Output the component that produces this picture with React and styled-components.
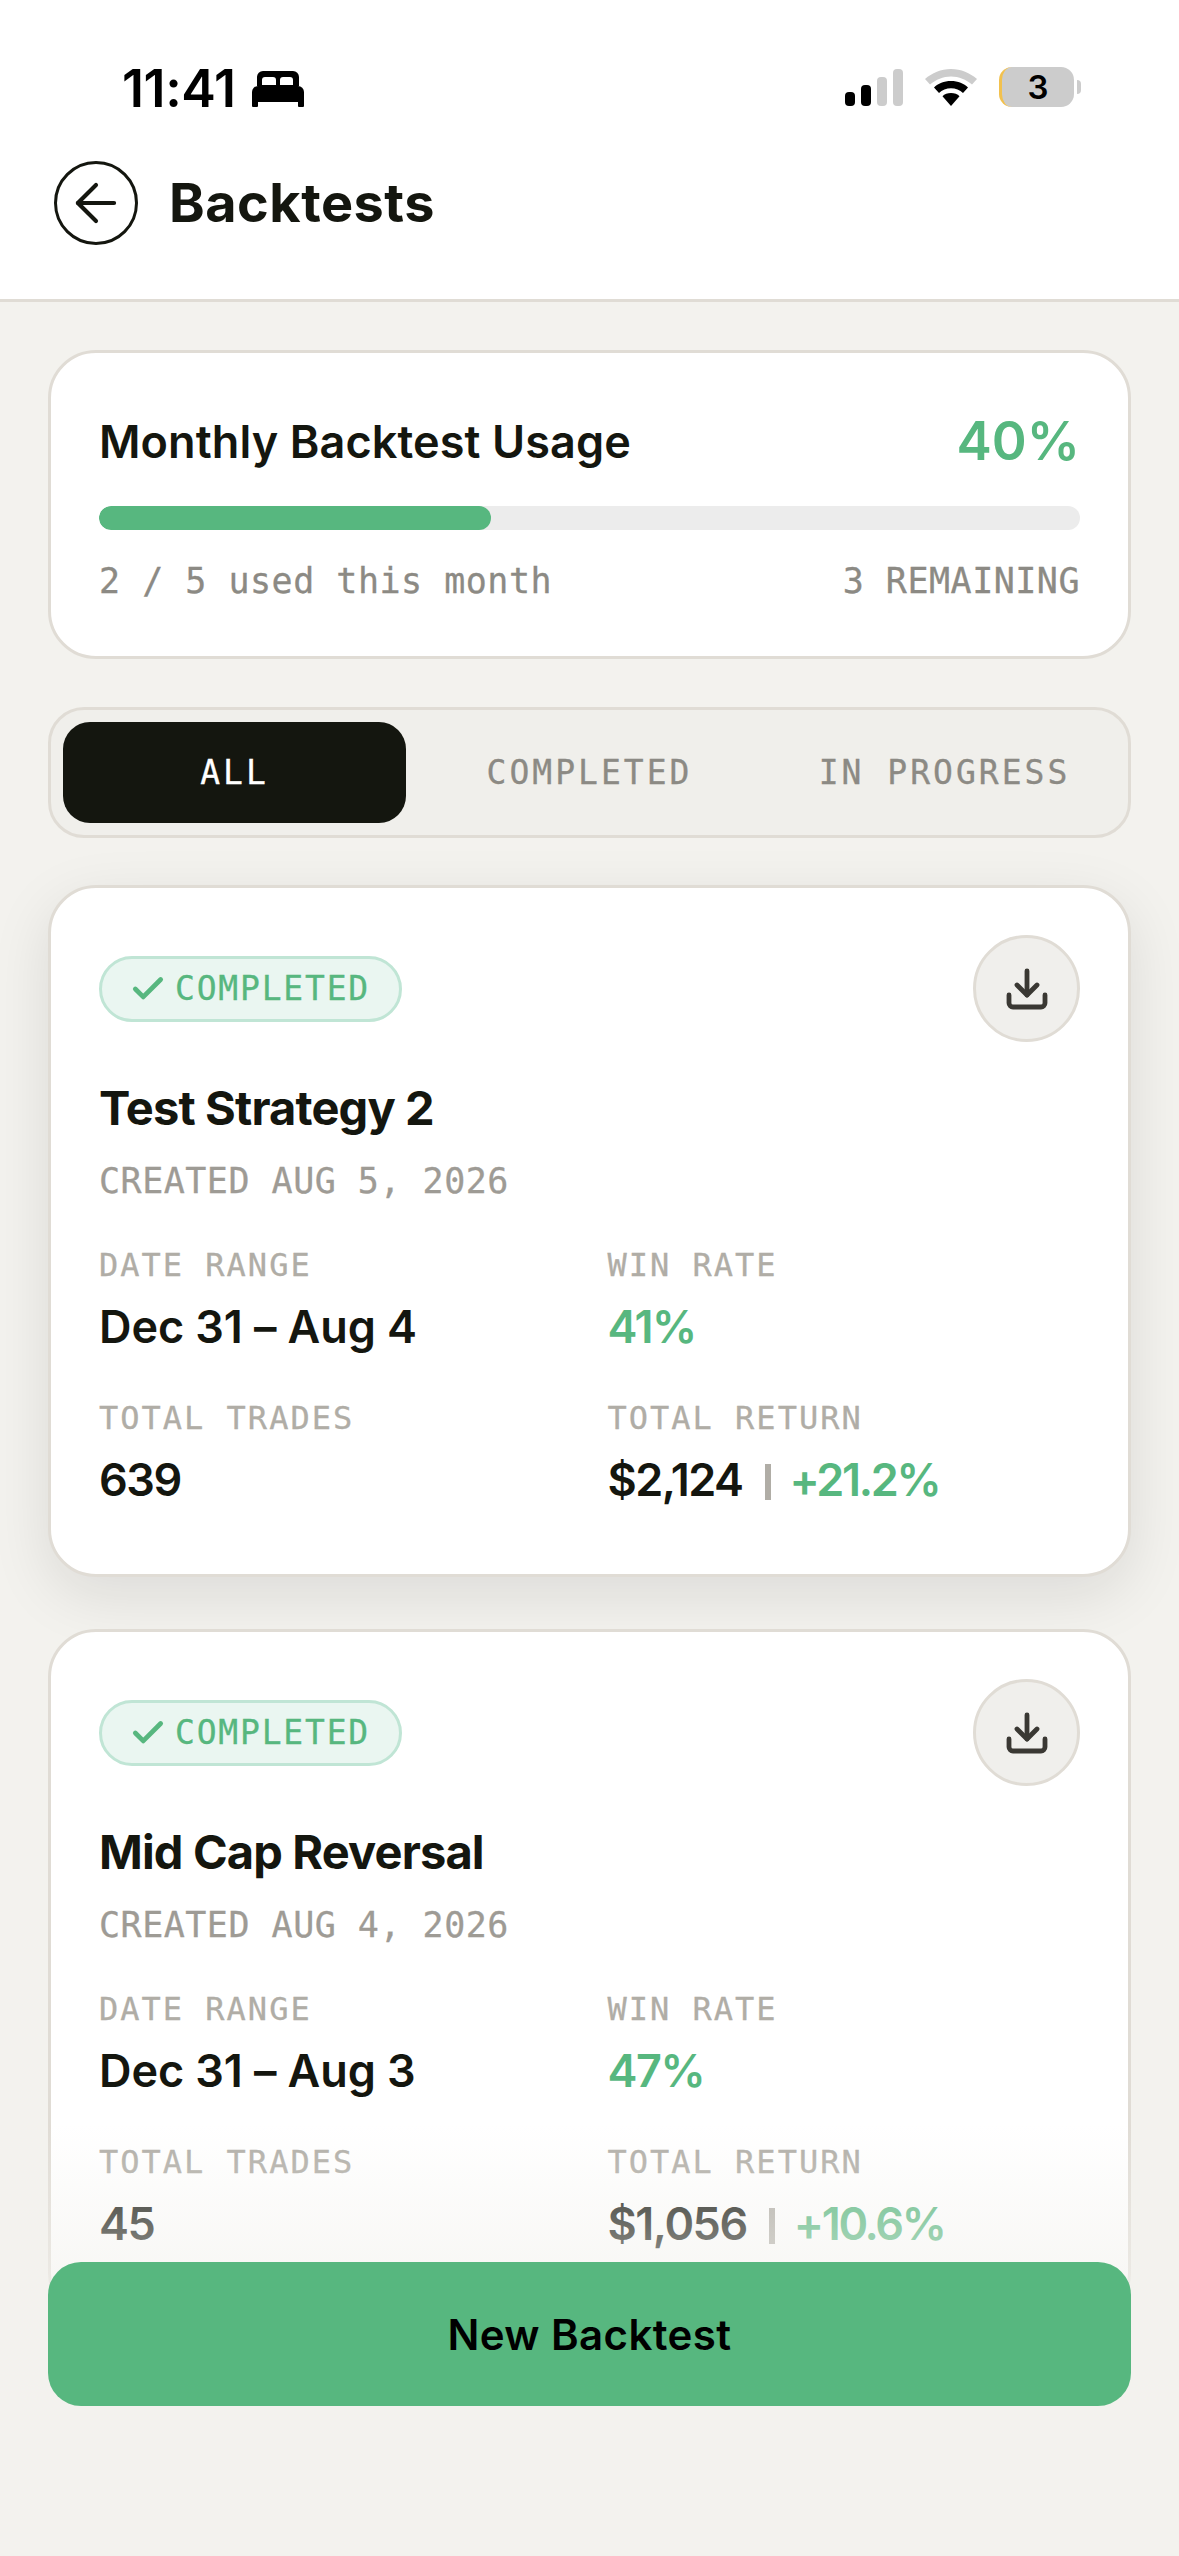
import React from "react";
import styled, { createGlobalStyle } from "styled-components";
import { ArrowLeft, Check, Download } from "lucide-react";

const GlobalStyle = createGlobalStyle`
  html, body {
    margin: 0;
    padding: 0;
    background: #f3f2ee;
  }
  * {
    box-sizing: border-box;
  }
`;

const sans = `Inter, "Liberation Sans", sans-serif`;
const mono = `"DejaVu Sans Mono", "Liberation Mono", monospace`;
const green = "#57b77f";
const ink = "#14160f";
const line = "#e0dcd5";

const Page = styled.div`
  position: relative;
  width: 1179px;
  height: 2556px;
  overflow: hidden;
  background: #f3f2ee;
  font-family: ${sans};
  color: ${ink};
`;

const Header = styled.header`
  height: 302px;
  background: #fff;
  border-bottom: 3px solid ${line};
`;

const StatusBar = styled.div`
  display: flex;
  justify-content: space-between;
  align-items: flex-start;
  height: 161px;
  padding: 65px 98px 0 122px;
`;

const TimeGroup = styled.div`
  display: flex;
  align-items: center;
  gap: 16px;
  height: 48px;
`;

const Time = styled.span`
  font-size: 52px;
  line-height: 48px;
  font-weight: 600;
  color: #000;
  letter-spacing: -0.4px;
`;

const StatusIcons = styled.div`
  display: flex;
  align-items: center;
  height: 44px;
  gap: 22px;
`;

const Battery = styled.div`
  display: flex;
  align-items: center;
  gap: 3px;
`;

const BatteryBody = styled.div`
  width: 75px;
  height: 40px;
  border-radius: 13px;
  background: #ccc;
  border-left: 3px solid #f2c14e;
  display: flex;
  align-items: center;
  justify-content: center;
  font-size: 33px;
  font-weight: 600;
  color: #000;
`;

const BatteryNub = styled.div`
  width: 4px;
  height: 14px;
  border-radius: 0 7px 7px 0;
  background: #ccc;
`;

const TitleRow = styled.div`
  display: flex;
  align-items: center;
  gap: 31px;
  padding-left: 54px;
`;

const BackButton = styled.div`
  width: 84px;
  height: 84px;
  border-radius: 50%;
  border: 3px solid ${ink};
  display: flex;
  align-items: center;
  justify-content: center;
  background: #fff;
`;

const PageTitle = styled.h1`
  margin: 0;
  font-size: 54px;
  line-height: 84px;
  font-weight: 700;
  letter-spacing: 0.5px;
`;

const Content = styled.main`
  padding: 48px 48px 0;
  display: flex;
  flex-direction: column;
`;

const UsageCard = styled.section`
  height: 309px;
  background: #fff;
  border: 3px solid ${line};
  border-radius: 48px;
  padding: 47px 48px 0;
`;

const UsageHead = styled.div`
  display: flex;
  justify-content: space-between;
  align-items: center;
  height: 82px;
`;

const UsageTitle = styled.h2`
  margin: 0;
  font-size: 45px;
  font-weight: 600;
  letter-spacing: 0.1px;
`;

const UsagePercent = styled.span`
  font-size: 53px;
  font-weight: 600;
  color: ${green};
`;

const Track = styled.div`
  height: 24px;
  margin-top: 24px;
  border-radius: 12px;
  background: #ececec;
  overflow: hidden;
`;

const Fill = styled.div`
  height: 100%;
  border-radius: 12px;
  background: ${green};
`;

const UsageFoot = styled.div`
  display: flex;
  justify-content: space-between;
  margin-top: 29px;
  font-family: ${mono};
  font-size: 35px;
  line-height: 44px;
  letter-spacing: 0.5px;
  -webkit-text-stroke: 0.3px #8c8a84;
  color: #8c8a84;
`;

const Tabs = styled.nav`
  display: flex;
  gap: 12px;
  height: 131px;
  margin-top: 48px;
  padding: 12px;
  background: #f0efeb;
  border: 3px solid ${line};
  border-radius: 36px;
`;

const Tab = styled.div`
  flex: 1;
  display: flex;
  align-items: center;
  justify-content: center;
  border-radius: 27px;
  font-family: ${mono};
  font-size: 33px;
  letter-spacing: 3px;
  -webkit-text-stroke: 0.3px currentColor;
  background: ${(p) => (p.$active ? ink : "transparent")};
  color: ${(p) => (p.$active ? "#fff" : "#8c8a84")};
`;

const Card = styled.article`
  margin-top: ${(p) => (p.$first ? "47px" : "52px")};
  background: #fff;
  border: 3px solid ${line};
  border-radius: 48px;
  padding: 47px 48px 64px;
  box-shadow: ${(p) => (p.$first ? "0 18px 60px rgba(20, 22, 15, 0.1)" : "none")};
`;

const CardTop = styled.div`
  display: flex;
  justify-content: space-between;
  align-items: center;
`;

const Badge = styled.div`
  display: flex;
  align-items: center;
  gap: 8px;
  height: 66px;
  padding: 0 29px 0 27px;
  border: 3px solid #c0e5d5;
  border-radius: 33px;
  background: #eaf6f1;
  font-family: ${mono};
  font-size: 33px;
  letter-spacing: 1.8px;
  -webkit-text-stroke: 0.3px ${green};
  color: ${green};
`;

const IconButton = styled.div`
  width: 107px;
  height: 107px;
  border-radius: 50%;
  border: 3px solid ${line};
  background: #f0efec;
  display: flex;
  align-items: center;
  justify-content: center;
  color: #3a3833;
`;

const CardTitle = styled.h3`
  margin: 36px 0 0;
  font-size: 47px;
  line-height: 60px;
  font-weight: 700;
  letter-spacing: -0.85px;
`;

const Created = styled.div`
  margin-top: 21px;
  font-family: ${mono};
  font-size: 35px;
  line-height: 44px;
  letter-spacing: 0.5px;
  -webkit-text-stroke: 0.3px #9e9b95;
  color: #9e9b95;
`;

const Stats = styled.div`
  display: grid;
  grid-template-columns: 1fr 1fr;
  column-gap: 36px;
  row-gap: 41px;
  margin-top: 42px;
`;

const Label = styled.div`
  font-family: ${mono};
  font-size: 32px;
  line-height: 40px;
  letter-spacing: 2px;
  -webkit-text-stroke: 0.3px #b0ada6;
  color: #b0ada6;
`;

const Value = styled.div`
  margin-top: 12px;
  font-size: 45px;
  line-height: 60px;
  font-weight: 600;
  letter-spacing: ${(p) => (p.$wide ? "-0.1px" : "-1.5px")};
  color: ${(p) => (p.$good ? green : ink)};
`;

const Good = styled.span`
  color: ${green};
  letter-spacing: -2.3px;
`;

const Divider = styled.span`
  display: inline-block;
  width: 6px;
  height: 36px;
  margin: 0 19px 0 22px;
  background: #b0ada6;
  vertical-align: -4px;
`;

const Footer = styled.div`
  position: absolute;
  left: 0;
  right: 0;
  bottom: 0;
  height: 432px;
  padding: 138px 48px 0;
  background: linear-gradient(to bottom, rgba(243, 242, 238, 0), #f3f2ee 256px);
`;

const PrimaryButton = styled.button`
  display: block;
  width: 100%;
  height: 144px;
  border: 0;
  border-radius: 33px;
  background: ${green};
  font-family: ${sans};
  font-size: 42px;
  font-weight: 600;
  letter-spacing: 0.4px;
  color: #000;
`;

const tabs = ["ALL", "COMPLETED", "IN PROGRESS"];

const backtests = [
  {
    name: "Test Strategy 2",
    created: "AUG 5, 2026",
    range: "Dec 31 – Aug 4",
    winRate: "41%",
    trades: "639",
    amount: "$2,124",
    gain: "+21.2%",
  },
  {
    name: "Mid Cap Reversal",
    created: "AUG 4, 2026",
    range: "Dec 31 – Aug 3",
    winRate: "47%",
    trades: "45",
    amount: "$1,056",
    gain: "+10.6%",
  },
];

function BedIcon() {
  return (
    <svg width="52" height="36" viewBox="0 0 52 36">
      <path
        fillRule="evenodd"
        d="M11 0h30a6 6 0 0 1 6 6v9H5V6a6 6 0 0 1 6-6zM10 14V9a3 3 0 0 1 3-3h8a3 3 0 0 1 3 3v5zM28 14V9a3 3 0 0 1 3-3h7a3 3 0 0 1 3 3v5z"
      />
      <path d="M6 15h40a6 6 0 0 1 6 6v14a1 1 0 0 1-1 1h-4a1 1 0 0 1-1-1v-4H6v4a1 1 0 0 1-1 1H1a1 1 0 0 1-1-1V21a6 6 0 0 1 6-6z" />
    </svg>
  );
}

function SignalIcon() {
  return (
    <svg width="58" height="37" viewBox="0 0 58 37">
      <rect x="0" y="23" width="10" height="14" rx="4" />
      <rect x="16" y="16" width="10" height="21" rx="4" />
      <rect x="32" y="8" width="10" height="29" rx="4" fill="#ccc" />
      <rect x="48" y="0" width="10" height="37" rx="4" fill="#ccc" />
    </svg>
  );
}

function WifiIcon() {
  return (
    <svg width="52" height="37" viewBox="0 0 52 37">
      <path d="M26 0c10 0 19 4 26 10l-5 5.500C41 10.500 34 7.500 26 7.500S11 10.500 5 15.500L0 10C7 4 16 0 26 0z" fill="#ccc" />
      <path d="M26 12c7 0 13 2.500 17 6.500l-5 5.500c-3-3-7.500-4.800-12-4.800S17 21 14 24l-5-5.500C13 14.500 19 12 26 12z" />
      <path d="M26 24c3.500 0 6.500 1.200 8.500 3.200L26 37l-8.500-9.800C19.500 25.200 22.500 24 26 24z" />
    </svg>
  );
}

function BacktestCard({ item, first }) {
  return (
    <Card $first={first}>
      <CardTop>
        <Badge>
          <Check size={38} strokeWidth={3} />
          COMPLETED
        </Badge>
        <IconButton>
          <Download size={48} strokeWidth={2.4} />
        </IconButton>
      </CardTop>
      <CardTitle>{item.name}</CardTitle>
      <Created>CREATED {item.created}</Created>
      <Stats>
        <div>
          <Label>DATE RANGE</Label>
          <Value $wide>{item.range}</Value>
        </div>
        <div>
          <Label>WIN RATE</Label>
          <Value $good>{item.winRate}</Value>
        </div>
        <div>
          <Label>TOTAL TRADES</Label>
          <Value>{item.trades}</Value>
        </div>
        <div>
          <Label>TOTAL RETURN</Label>
          <Value>
            {item.amount}
            <Divider />
            <Good>{item.gain}</Good>
          </Value>
        </div>
      </Stats>
    </Card>
  );
}

export default function App() {
  const used = 2;
  const limit = 5;

  return (
    <Page>
      <GlobalStyle />
      <Header>
        <StatusBar>
          <TimeGroup>
            <Time>11:41</Time>
            <BedIcon />
          </TimeGroup>
          <StatusIcons>
            <SignalIcon />
            <WifiIcon />
            <Battery>
              <BatteryBody>3</BatteryBody>
              <BatteryNub />
            </Battery>
          </StatusIcons>
        </StatusBar>
        <TitleRow>
          <BackButton>
            <ArrowLeft size={62} strokeWidth={1.6} />
          </BackButton>
          <PageTitle>Backtests</PageTitle>
        </TitleRow>
      </Header>

      <Content>
        <UsageCard>
          <UsageHead>
            <UsageTitle>Monthly Backtest Usage</UsageTitle>
            <UsagePercent>40%</UsagePercent>
          </UsageHead>
          <Track>
            <Fill style={{ width: `${(used / limit) * 100}%` }} />
          </Track>
          <UsageFoot>
            <span>
              {used} / {limit} used this month
            </span>
            <span>{limit - used} REMAINING</span>
          </UsageFoot>
        </UsageCard>

        <Tabs>
          {tabs.map((t, i) => (
            <Tab key={t} $active={i === 0}>
              {t}
            </Tab>
          ))}
        </Tabs>

        {backtests.map((b, i) => (
          <BacktestCard key={b.name} item={b} first={i === 0} />
        ))}
      </Content>

      <Footer>
        <PrimaryButton>New Backtest</PrimaryButton>
      </Footer>
    </Page>
  );
}
